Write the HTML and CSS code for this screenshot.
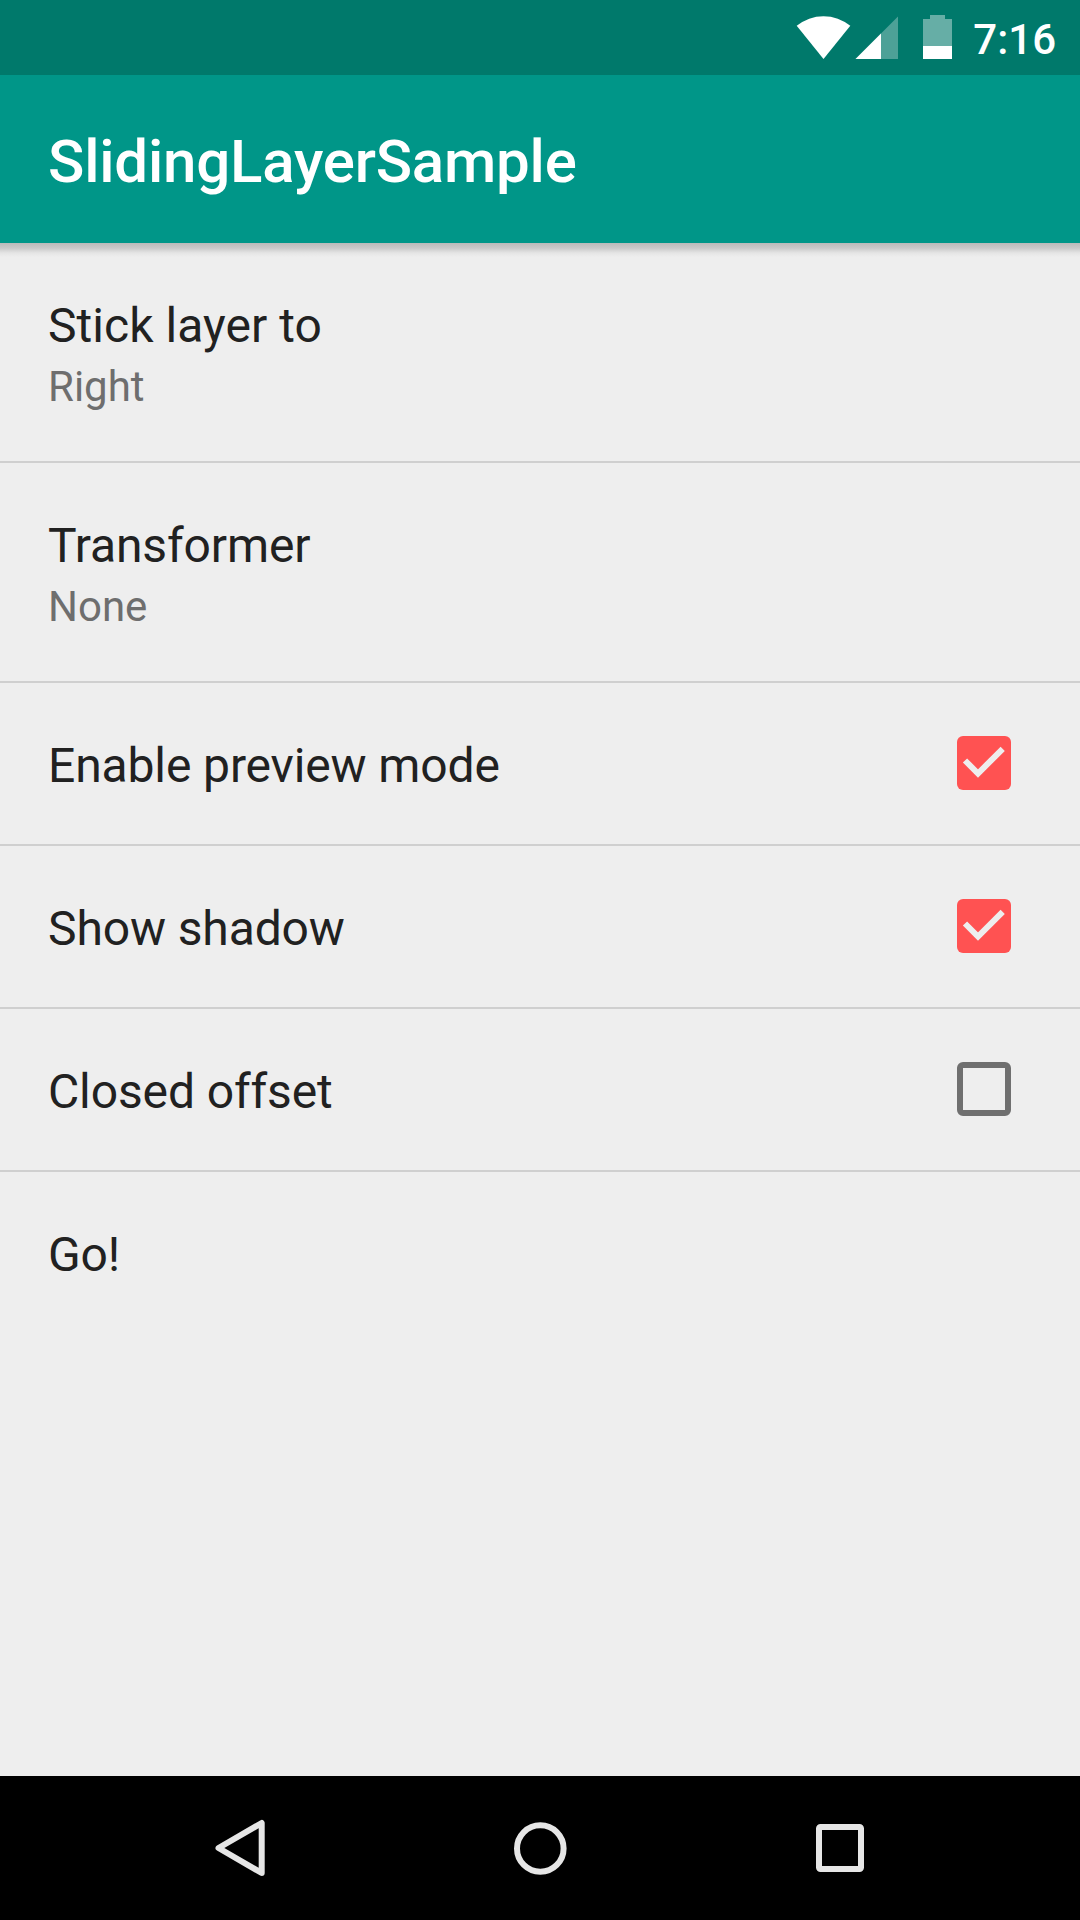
FILE: index.html
```html
<!DOCTYPE html>
<html lang="en">
<head>
<meta charset="utf-8">
<title>SlidingLayerSample</title>
<link rel="stylesheet" href="styles.css">
</head>
<body>
<div class="statusbar">
  <svg class="status-icons" width="160" height="48" viewBox="794 14 160 48">
    <path fill="#fff" d="M796.700 25.800A42 42 0 0 1 850.300 25.800L823.500 59Z"/>
    <path fill="#fff" fill-opacity=".3" d="M898 16.500V59H855.500Z"/>
    <path fill="#fff" d="M881 33.500V59H855.500Z"/>
    <path fill="#fff" fill-opacity=".4" d="M923 19H930V15H945V19H952V46H923Z"/>
    <path fill="#fff" d="M923 46H952V59H923Z"/>
  </svg>
  <span class="clock">7:16</span>
</div>
<header class="appbar"><h1>SlidingLayerSample</h1></header>
<main class="list">
  <div class="row double"><div class="title loose">Stick layer to</div><div class="summary">Right</div></div>
  <div class="row double"><div class="title">Transformer</div><div class="summary">None</div></div>
  <div class="row"><div class="title">Enable preview mode</div>
    <svg class="check" width="56" height="56" viewBox="0 0 56 56"><rect x="1" y="1" width="54" height="54" rx="6" fill="#ff5252"/><path d="M9 25.500L22 38.500L46.700 13.800" fill="none" stroke="#eee" stroke-width="6"/></svg></div>
  <div class="row"><div class="title">Show shadow</div>
    <svg class="check" width="56" height="56" viewBox="0 0 56 56"><rect x="1" y="1" width="54" height="54" rx="6" fill="#ff5252"/><path d="M9 25.500L22 38.500L46.700 13.800" fill="none" stroke="#eee" stroke-width="6"/></svg></div>
  <div class="row"><div class="title">Closed offset</div>
    <svg class="check" width="56" height="56" viewBox="0 0 56 56"><rect x="4" y="4" width="48" height="48" rx="3" fill="none" stroke="#6f6f6f" stroke-width="6"/></svg></div>
  <div class="row last"><div class="title">Go!</div></div>
</main>
<nav class="navbar">
  <svg width="1080" height="144" viewBox="0 1776 1080 144" fill="none" stroke="#e6e6e6" stroke-width="6">
    <path d="M261.700 1823V1873L218.500 1848Z" stroke-linejoin="round"/>
    <circle cx="540.300" cy="1848.500" r="23.300"/>
    <rect x="819" y="1827" width="42" height="42" rx="1.500"/>
  </svg>
</nav>
</body>
</html>
```
FILE: styles.css
```css
* { box-sizing: border-box; }
body { margin: 0; width: 1080px; height: 1920px; display: flex; flex-direction: column; background: #eee; font-family: Roboto, sans-serif; overflow: hidden; }
.statusbar { height: 75px; flex: none; background: #00796b; display: flex; align-items: flex-start; justify-content: flex-end; padding: 14px 24px 0 0; }
.status-icons { margin-right: 19px; }
.clock { color: #fff; font-size: 42px; font-weight: 500; line-height: 50px; padding-top: 1px; }
.appbar { height: 168px; flex: none; background: #009688; display: flex; align-items: center; padding: 5px 48px 0; }
.appbar h1 { margin: 0; color: #fff; font-size: 60px; font-weight: 500; line-height: 70px; letter-spacing: -.2px; }
/* shadow cast by the app bar */
.list { flex: 1; display: flex; flex-direction: column; background: linear-gradient(#bababa, #c9c9c9 5px, #e5e5e5 10px, #eee 14px) no-repeat 0 0 / 100% 14px; }
.row { height: 163px; display: flex; align-items: center; justify-content: space-between; padding: 3px 68px 0 48px; border-bottom: 2px solid #cfcfcf; }
.row.double { height: 220px; flex-direction: column; align-items: flex-start; justify-content: center; gap: 8px; padding-top: 4px; }
.row.last { height: 161px; border-bottom: 0; }
.title { color: #212121; font-size: 48px; line-height: 57px; letter-spacing: -.12px; }
.title.loose { letter-spacing: .05px; }
.summary { color: #6e6e6e; font-size: 42px; line-height: 50px; }
.check { position: relative; top: -2px; }
.navbar { height: 144px; flex: none; background: #000; }
.navbar svg { display: block; }
```
